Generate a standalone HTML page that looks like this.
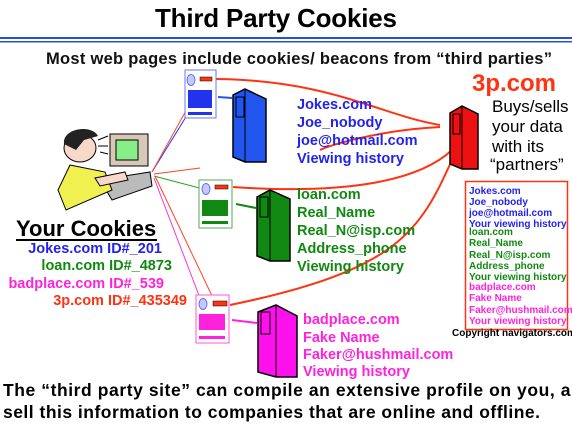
<!DOCTYPE html>
<html><head><meta charset="utf-8"><style>
body{margin:0;width:572px;height:425px;overflow:hidden;background:#fff;font-family:"Liberation Sans",Arial,sans-serif}
svg{position:absolute;left:0;top:0}
</style></head><body>
<svg width="572" height="425" viewBox="0 0 572 425" font-family="Liberation Sans, Arial, sans-serif" font-weight="bold">
<text x="155" y="27" textLength="242" font-size="26" fill="#000">Third Party Cookies</text>
<rect x="0" y="37" width="572" height="2" fill="#2a4fd8"/>
<rect x="0" y="41" width="572" height="1.5" fill="#2a4fd8"/>
<text x="46" y="64" textLength="506" font-size="16.5" fill="#111">Most web pages include cookies/ beacons from “third parties”</text>

<g fill="none" stroke-width="1">
<path d="M210 78 L152 172" stroke="#2233ff"/>
<path d="M203 80 L152 172" stroke="#ff4422"/>
<path d="M207 190 L154 176" stroke="#22aa22"/>
<path d="M200 168 L154 174" stroke="#ff4422"/>
<path d="M200 298 L154 178" stroke="#ff33cc"/>
<path d="M213 298 L155 176" stroke="#ff4422"/>
</g>
<g fill="none" stroke="#ff3311" stroke-width="2">
<path d="M440 125 C380 115 330 80 215 79"/>
<path d="M440 127 C380 130 330 145 320 150"/>
<path d="M452 150 C420 180 350 195 233 187"/>
<path d="M452 160 C420 230 400 270 230 305"/>
</g>

<rect x="185" y="70" width="31" height="48" fill="#fff" stroke="#6677ff"/>
<ellipse cx="191" cy="80" rx="4" ry="5.5" fill="#c8c8ff" stroke="#4455ff" stroke-width=".8"/>
<rect x="200" y="77" width="12" height="4" fill="#ff3311" stroke="#000" stroke-width=".5"/>
<rect x="188" y="90" width="24" height="18" fill="#2233ee"/>
<rect x="188" y="112" width="24" height="3" fill="#2233ee"/>
<polygon points="233,95 245,89 266,99 266,162 245,162 233,157" fill="#2255ee" stroke="#000" stroke-width="1.5"/>
<rect x="236" y="97" width="8" height="20" fill="none" stroke="#000"/>
<path d="M245 90 L245 162" stroke="#000"/>
<path d="M232 98 L218 97" stroke="#2255ee" stroke-width="2"/>
<g fill="#2222ee" font-size="14.5">
<text x="297" y="109">Jokes.com</text><text x="297" y="127">Joe_nobody</text><text x="297" y="145">joe@hotmail.com</text><text x="297" y="163">Viewing history</text></g>

<rect x="199" y="180" width="33" height="48" fill="#fff" stroke="#55aa55"/>
<ellipse cx="206" cy="189" rx="4" ry="5.5" fill="#c8c8ff" stroke="#4455ff" stroke-width=".8"/>
<rect x="215" y="185" width="13" height="4" fill="#ff3311" stroke="#000" stroke-width=".5"/>
<rect x="202" y="200" width="26" height="16" fill="#118811"/>
<rect x="202" y="221" width="26" height="3" fill="#118811"/>
<polygon points="257,197 270,190 290,199 290,261 270,261 257,256" fill="#118811" stroke="#000" stroke-width="1.5"/>
<rect x="260" y="197" width="8" height="20" fill="none" stroke="#000"/>
<path d="M270 191 L270 261" stroke="#000"/>
<path d="M256 208 L236 204" stroke="#118811" stroke-width="2"/>
<g fill="#118811" font-size="14.5">
<text x="297" y="199">loan.com</text><text x="297" y="217">Real_Name</text><text x="297" y="235">Real_N@isp.com</text><text x="297" y="253">Address_phone</text><text x="297" y="271">Viewing history</text></g>

<rect x="196" y="295" width="33" height="48" fill="#fff" stroke="#ff55dd"/>
<ellipse cx="203" cy="304" rx="4" ry="5.5" fill="#c8c8ff" stroke="#4455ff" stroke-width=".8"/>
<rect x="213" y="301" width="14" height="5" fill="#ff3311" stroke="#000" stroke-width=".5"/>
<rect x="199" y="314" width="26" height="16" fill="#ff22dd"/>
<rect x="199" y="336" width="26" height="3" fill="#ff22dd"/>
<polygon points="258,312 276,305 297,316 297,377 276,377 258,372" fill="#ff11ee" stroke="#000" stroke-width="1.5"/>
<rect x="261" y="312" width="9" height="22" fill="none" stroke="#000"/>
<path d="M276 306 L276 377" stroke="#000"/>
<path d="M257 323 L232 320" stroke="#ff22dd" stroke-width="2"/>
<g fill="#ff22dd" font-size="14.5">
<text x="303" y="324">badplace.com</text><text x="303" y="342">Fake Name</text><text x="303" y="359">Faker@hushmail.com</text><text x="303" y="376">Viewing history</text></g>

<polygon points="450,113 462,106 478,114 478,169 462,169 450,164" fill="#ee1111" stroke="#000" stroke-width="1.5"/>
<rect x="453" y="114" width="7" height="20" fill="none" stroke="#000"/>
<path d="M462 107 L462 169" stroke="#000"/>
<text x="472" y="91" font-size="24" fill="#ff3311">3p.com</text>
<g font-size="17" font-weight="normal" fill="#000">
<text x="492" y="112">Buys/sells</text><text x="492" y="132">your data</text><text x="492" y="152">with its</text><text x="490" y="170">“partners”</text></g>
<rect x="465.5" y="181.5" width="102" height="148" fill="#fff" stroke="#ff3311" stroke-width="1.5"/>
<g font-size="10">
<g fill="#2222ee"><text x="469" y="194">Jokes.com</text><text x="469" y="205">Joe_nobody</text><text x="469" y="216">joe@hotmail.com</text><text x="469" y="227">Your viewing history</text></g>
<g fill="#118811"><text x="469" y="235">loan.com</text><text x="469" y="246">Real_Name</text><text x="469" y="258">Real_N@isp.com</text><text x="469" y="269">Address_phone</text><text x="469" y="280">Your viewing history</text></g>
<g fill="#ff22dd"><text x="469" y="290">badplace.com</text><text x="469" y="301">Fake Name</text><text x="469" y="313">Faker@hushmail.com</text><text x="469" y="324">Your viewing history</text></g>
</g>
<text x="452" y="336" font-size="10" fill="#000">Copyright navigators.com</text>

<g>
<path d="M100 180 L150 172 L152 186 L112 200 Z" fill="#bbb" stroke="#000"/>
<ellipse cx="80" cy="148" rx="16" ry="14" fill="#f8d8c8" stroke="#000"/>
<path d="M64 144 C62 128 92 124 98 136 L84 140 L76 150 Z" fill="#222"/>
<path d="M70 165 L105 172 L112 190 L66 210 L58 190 Z" fill="#f0f050" stroke="#000"/>
<path d="M95 178 L125 172 L128 180 L100 186 Z" fill="#f8d8c8" stroke="#000"/>
<rect x="110" y="134" width="38" height="32" fill="#d8c8b8" stroke="#000"/>
<rect x="116" y="140" width="22" height="20" fill="#88ee88" stroke="#000"/>
<path d="M98 140 L108 136 M98 146 L108 146 M100 152 L108 154" stroke="#000"/>
</g>

<text x="16" y="236" font-size="22" fill="#000">Your Cookies</text>
<rect x="16" y="239" width="141" height="2" fill="#000"/>
<g font-size="14.5" text-anchor="end">
<text x="162" y="253" fill="#2222ee">Jokes.com  ID#_201</text>
<text x="172" y="270" fill="#118811">loan.com  ID#_4873</text>
<text x="164" y="288" fill="#ff22dd">badplace.com  ID#_539</text>
<text x="187" y="305" fill="#ff3311">3p.com  ID#_435349</text>
</g>

<text x="3" y="396" font-size="17.5" textLength="590" fill="#000">The “third party site” can compile an extensive profile on you, and</text>
<text x="3" y="418" font-size="17.5" textLength="537" fill="#000">sell this information to companies that are online and offline.</text>
</svg>
</body></html>
